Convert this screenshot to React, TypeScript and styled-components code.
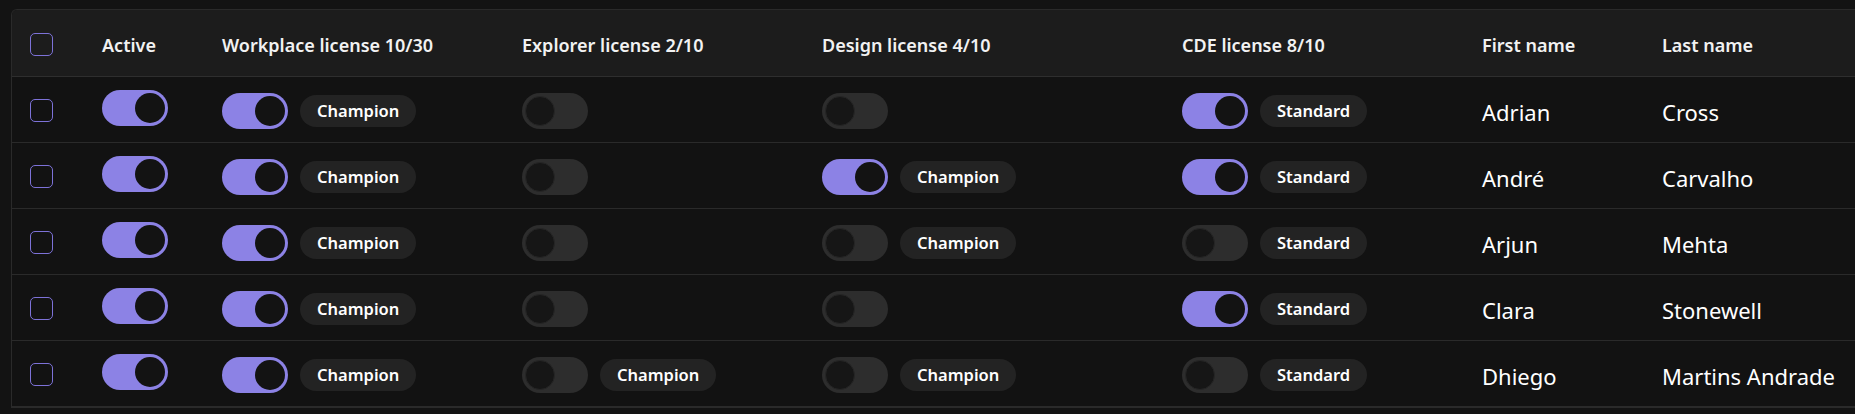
import React from "react";
import styled, { createGlobalStyle } from "styled-components";

const Global = createGlobalStyle`
  html, body {
    margin: 0;
    padding: 0;
    background: #131313;
    overflow: hidden;
    font-family: "Noto Sans", "Open Sans", sans-serif;
  }
`;

const Page = styled.div`
  padding: 9px 0 0 11px;
  width: 1855px;
  box-sizing: border-box;
`;

const Table = styled.div`
  display: grid;
  grid-template-columns: 72px 120px 300px 300px 360px 300px 180px 320px;
  width: max-content;
  border: 1px solid #2a2a2a;
  border-right: none;
  border-radius: 6px 0 0 0;
  background: #121212;
  overflow: hidden;
`;

const HeadCell = styled.div`
  height: 67px;
  box-sizing: border-box;
  background: #1c1c1c;
  border-bottom: 1px solid #2e2e2e;
  display: flex;
  align-items: center;
  padding-left: 18px;
  padding-top: 3px;
  color: #f2f2f2;
  font-size: 18px;
  font-weight: 600;
  white-space: nowrap;
`;

const Cell = styled.div<{ $text?: boolean }>`
  height: 66px;
  box-sizing: border-box;
  border-bottom: 1px solid #2a2a2a;
  display: flex;
  align-items: center;
  gap: 12px;
  padding-left: 18px;
  padding-top: ${(p) => (p.$text ? "5px" : "2px")};
  color: #ffffff;
  font-size: 22px;
  font-weight: 400;
  white-space: nowrap;
`;

const Check = styled.span`
  width: 23px;
  height: 23px;
  box-sizing: border-box;
  border: 1.5px solid #7d72d8;
  border-radius: 5px;
  display: inline-block;
`;

const Track = styled.span<{ $on: boolean; $raised?: boolean }>`
  position: relative;
  width: 66px;
  height: 36px;
  flex: none;
  border-radius: 18px;
  background: ${(p) => (p.$on ? "#8c82e5" : "#2d2d2d")};
  margin-bottom: ${(p) => (p.$raised ? "6px" : "0")};
  display: inline-block;
`;

const Knob = styled.span<{ $on: boolean }>`
  position: absolute;
  top: 3px;
  left: ${(p) => (p.$on ? "33px" : "3px")};
  width: 30px;
  height: 30px;
  border-radius: 50%;
  box-sizing: border-box;
  background: ${(p) => (p.$on ? "#131313" : "#161616")};
  border: ${(p) => (p.$on ? "none" : "1px solid #262626")};
`;

const Badge = styled.span`
  height: 32px;
  padding: 0 17px;
  border-radius: 16px;
  background: #232323;
  color: #ffffff;
  font-size: 16.5px;
  font-weight: 600;
  display: inline-flex;
  align-items: center;
`;

type Lic = { on: boolean; badge?: string };
type Row = {
  wp: Lic;
  exp: Lic;
  des: Lic;
  cde: Lic;
  first: string;
  last: string;
};

const rows: Row[] = [
  {
    wp: { on: true, badge: "Champion" },
    exp: { on: false },
    des: { on: false },
    cde: { on: true, badge: "Standard" },
    first: "Adrian",
    last: "Cross",
  },
  {
    wp: { on: true, badge: "Champion" },
    exp: { on: false },
    des: { on: true, badge: "Champion" },
    cde: { on: true, badge: "Standard" },
    first: "André",
    last: "Carvalho",
  },
  {
    wp: { on: true, badge: "Champion" },
    exp: { on: false },
    des: { on: false, badge: "Champion" },
    cde: { on: false, badge: "Standard" },
    first: "Arjun",
    last: "Mehta",
  },
  {
    wp: { on: true, badge: "Champion" },
    exp: { on: false },
    des: { on: false },
    cde: { on: true, badge: "Standard" },
    first: "Clara",
    last: "Stonewell",
  },
  {
    wp: { on: true, badge: "Champion" },
    exp: { on: false, badge: "Champion" },
    des: { on: false, badge: "Champion" },
    cde: { on: false, badge: "Standard" },
    first: "Dhiego",
    last: "Martins Andrade",
  },
];

const Toggle = ({ on, raised }: { on: boolean; raised?: boolean }) => (
  <Track $on={on} $raised={raised}>
    <Knob $on={on} />
  </Track>
);

const LicCell = ({ lic }: { lic: Lic }) => (
  <Cell>
    <Toggle on={lic.on} />
    {lic.badge && <Badge>{lic.badge}</Badge>}
  </Cell>
);

const headers = [
  "Active",
  "Workplace license 10/30",
  "Explorer license 2/10",
  "Design license 4/10",
  "CDE license 8/10",
  "First name",
  "Last name",
];

export default function App() {
  return (
    <>
      <Global />
      <Page>
        <Table>
          <HeadCell>
            <Check />
          </HeadCell>
          {headers.map((h) => (
            <HeadCell key={h}>{h}</HeadCell>
          ))}
          {rows.map((r) => (
            <React.Fragment key={r.first}>
              <Cell>
                <Check />
              </Cell>
              <Cell>
                <Toggle on raised />
              </Cell>
              <LicCell lic={r.wp} />
              <LicCell lic={r.exp} />
              <LicCell lic={r.des} />
              <LicCell lic={r.cde} />
              <Cell $text>{r.first}</Cell>
              <Cell $text>{r.last}</Cell>
            </React.Fragment>
          ))}
        </Table>
      </Page>
    </>
  );
}
